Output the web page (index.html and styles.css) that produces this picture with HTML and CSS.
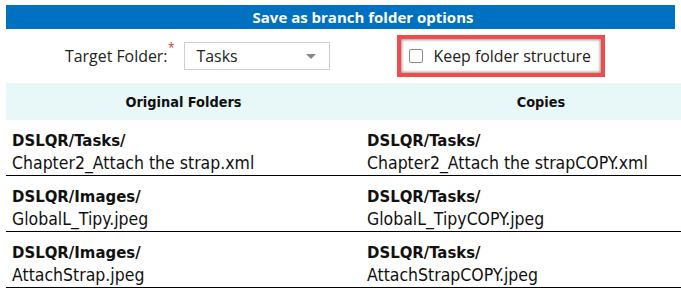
FILE: index.html
```html
<!DOCTYPE html>
<html>
<head>
<meta charset="utf-8">
<link rel="stylesheet" href="styles.css">
</head>
<body>
<div class="page">
  <div class="title">Save as branch folder options</div>
  <div class="options">
    <label class="target-label">Target Folder:<span class="req">*</span></label>
    <div class="select">
      <span class="select-value">Tasks</span>
      <span class="select-arrow"></span>
    </div>
    <div class="keep-highlight">
      <div class="keep-inner">
        <span class="checkbox"></span>
        <span class="keep-text">Keep folder structure</span>
      </div>
    </div>
  </div>
  <div class="table">
    <div class="thead">
      <div class="th">Original Folders</div>
      <div class="th th-copies">Copies</div>
    </div>
    <div class="row">
      <div class="cell"><div class="path">DSLQR/Tasks/</div><div class="file">Chapter2_Attach the strap.xml</div></div>
      <div class="cell"><div class="path">DSLQR/Tasks/</div><div class="file">Chapter2_Attach the strapCOPY.xml</div></div>
    </div>
    <div class="row">
      <div class="cell"><div class="path">DSLQR/Images/</div><div class="file">GlobalL_Tipy.jpeg</div></div>
      <div class="cell"><div class="path">DSLQR/Tasks/</div><div class="file">GlobalL_TipyCOPY.jpeg</div></div>
    </div>
    <div class="row">
      <div class="cell"><div class="path">DSLQR/Images/</div><div class="file">AttachStrap.jpeg</div></div>
      <div class="cell"><div class="path">DSLQR/Tasks/</div><div class="file">AttachStrapCOPY.jpeg</div></div>
    </div>
  </div>
</div>
</body>
</html>
```
FILE: styles.css
```css
html, body {
  margin: 0;
  padding: 0;
  overflow: hidden;
  background: #fff;
}
.page {
  padding: 5px 0 0 6px;
  width: 675px;
}
.title {
  width: 669px;
  height: 24px;
  box-sizing: border-box;
  padding-left: 45px;
  background: #0070c0;
  color: #fff;
  font: bold 15px/24px "Open Sans", sans-serif;
  text-align: center;
}
.options {
  height: 54px;
  display: flex;
  align-items: center;
  font-family: "Open Sans", sans-serif;
  font-size: 15.9px;
  color: #222;
}
.target-label {
  margin-left: 59px;
  position: relative;
  padding-right: 7px;
}
.req {
  color: #e03030;
  font-size: 12px;
  position: absolute;
  right: 0;
  top: -6px;
}
.select {
  margin-left: 9px;
  width: 146px;
  height: 28px;
  box-sizing: border-box;
  border: 1px solid #cfcfcf;
  display: flex;
  align-items: center;
  justify-content: space-between;
  padding: 0 13px 0 12px;
}
.select-value {
  color: #222;
}
.select-arrow {
  width: 0;
  height: 0;
  border-left: 5px solid transparent;
  border-right: 5px solid transparent;
  border-top: 5px solid #888;
}
.keep-highlight {
  margin-left: 67px;
  width: 208px;
  height: 42px;
  box-sizing: border-box;
  border: 4px solid #f24b4b;
}
.keep-inner {
  height: 100%;
  box-sizing: border-box;
  box-shadow: inset 0 0 3px 1px #9a9a9a;
  display: flex;
  align-items: center;
  padding-left: 8px;
}
.checkbox {
  width: 12px;
  height: 12px;
  border: 1px solid #8a8a8a;
  border-radius: 2px;
  background: #fff;
  margin-right: 11px;
}
.keep-text {
  color: #222;
}
.table {
  font-family: "DejaVu Sans Condensed", "DejaVu Sans", sans-serif;
  color: #111;
}
.thead {
  display: grid;
  grid-template-columns: 355px 320px;
  height: 37px;
  background: #e8f8f8;
  align-items: center;
  font-weight: bold;
  font-size: 14.4px;
}
.th {
  text-align: center;
}
.th-copies {
  padding-left: 40px;
}
.row {
  display: grid;
  grid-template-columns: 355px 320px;
  padding-top: 9px;
  border-bottom: 1px solid #000;
  font-size: 17.5px;
  line-height: 23px;
}
.cell {
  padding-left: 6px;
  white-space: nowrap;
}
.path {
  font-weight: bold;
  font-size: 16.6px;
}
```
